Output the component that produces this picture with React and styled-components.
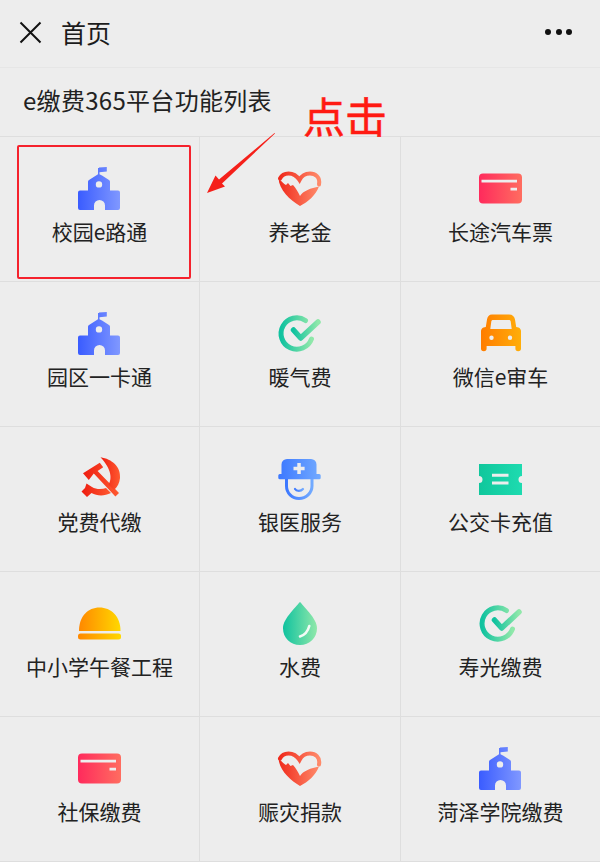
import styled, { createGlobalStyle } from 'styled-components';

const GlobalStyle = createGlobalStyle`
    html, body {
        margin: 0;
        padding: 0;
        background: #ededed;
        overflow: hidden;
    }
`;

const Page = styled.div`
    position: relative;
    width: 600px;
    height: 862px;
    background: #ededed;
    color: #222;
    font-family: "Noto Sans CJK SC", "Noto Sans", sans-serif;
`;

const Header = styled.header`
    height: 68px;
    box-sizing: border-box;
    display: flex;
    align-items: center;
    padding: 0 19px 3px;
    border-bottom: 1px solid #e6e6e6;
`;

const HeaderTitle = styled.h1`
    flex: 1;
    margin: 0 0 0 19px;
    font-size: 25px;
    font-weight: 400;
    line-height: 32px;
    color: #1c1c1c;
`;

const Dots = styled.div`
    display: flex;
    gap: 4.5px;
    margin-right: 9px;
`;

const Dot = styled.span`
    width: 6px;
    height: 6px;
    border-radius: 50%;
    background: #111;
`;

const SectionTitle = styled.h2`
    height: 68px;
    margin: 0;
    padding: 0 23px 6px;
    box-sizing: border-box;
    display: flex;
    align-items: center;
    font-size: 24px;
    font-weight: 400;
    letter-spacing: 0.3px;
    color: #222;
`;

const Grid = styled.div`
    display: grid;
    grid-template-columns: 200px 201px 199px;
    grid-auto-rows: 145px;
    border-top: 1px solid #dedede;
`;

const Cell = styled.div`
    position: relative;
    display: flex;
    flex-direction: column;
    align-items: center;
    padding-top: 30px;
    box-sizing: border-box;
    border-right: ${({ $last }) => ($last ? 'none' : '1px solid #dedede')};
    border-bottom: 1px solid #dedede;
`;

const Glyph = styled.svg`
    display: block;
    width: 44px;
    height: 44px;
    overflow: visible;
`;

const Label = styled.span`
    margin-top: 5px;
    font-size: 21px;
    line-height: 30px;
    white-space: nowrap;
`;

const Highlight = styled.div`
    position: absolute;
    left: 17px;
    top: 8px;
    width: 170px;
    height: 130px;
    border: 2px solid #f5222d;
    border-radius: 2px;
`;

const ClickNote = styled.div`
    position: absolute;
    left: 303px;
    top: 85px;
    font-size: 42px;
    font-weight: 400;
    line-height: 60px;
    color: #ff1a12;
    -webkit-text-stroke: 0.5px #ff1a12;
`;

const Arrow = styled.svg`
    position: absolute;
    left: 200px;
    top: 128px;
`;

const Defs = styled.svg`
    position: absolute;
    width: 0;
    height: 0;
`;

const gradients = {
    blue: ['#3a5cff', '#8098ff'],
    red: ['#f02a1c', '#ff8a6a'],
    pink: ['#ff2a5c', '#ff6d60'],
    green: ['#10c29f', '#90e8aa'],
    orange: ['#ff7c00', '#ffae0a'],
    party: ['#ee1c10', '#ff5a30'],
    sky: ['#3c78ff', '#72aaff'],
    teal: ['#10c79c', '#1edbb0'],
    sun: ['#ff8800', '#ffd800'],
};

const School = () => (
    <Glyph viewBox="0 0 44 44">
        <path fill="url(#blue)" fillRule="evenodd" d="M20 7.200V1h1v-.5L28.800 0v4.400L21.500 5.200v2L24 8.500 31 13c.7.500 1 1 1 1.800v8.700h8a2 2 0 0 1 2 2V41a2 2 0 0 1-2 2H27v-4.500a5.500 5.500 0 0 0-11 0V43H2a2 2 0 0 1-2-2V25.500a2 2 0 0 1 2-2h8v-8.700c0-.8.300-1.300 1-1.800zM21 14.200a3.200 3.200 0 1 0 0 6.400 3.200 3.200 0 0 0 0-6.400z" />
    </Glyph>
);

const Heart = () => (
    <Glyph viewBox="0 0 44 44">
        <path fill="none" stroke="url(#red)" strokeWidth="4" strokeLinecap="round" d="M41 17.500C42.500 10 37 6.500 32 6.500 27 6.500 23.500 9 21.500 13 19 9 15 6.500 10.500 6.500 6 6.500 3.500 8.500 2 11.500" />
        <path fill="url(#red)" d="M.5 11C3 14 6 17 8 18l2-2 2.500 3 2.500-1C18 21 20 25 22 29 25 24 33 21 41 19.500 38 28 30 35 22 39 12 33 1 23 .5 11z" />
    </Glyph>
);

const Card = () => (
    <Glyph viewBox="0 0 44 44">
        <path fill="url(#pink)" fillRule="evenodd" d="M4 6.500h35a4 4 0 0 1 4 4v22a4 4 0 0 1-4 4H4a4 4 0 0 1-4-4v-22a4 4 0 0 1 4-4zM2.500 12.800v2.800H38v-2.800zM31.500 20.800v2.600H38v-2.600z" />
    </Glyph>
);

const Check = () => (
    <Glyph viewBox="0 0 44 44">
        <path fill="none" stroke="url(#green)" strokeWidth="5" strokeLinecap="round" d="M27.500 8.500A15.700 15.700 0 1 0 33.500 27" />
        <path fill="none" stroke="url(#green)" strokeWidth="5.500" strokeLinecap="round" strokeLinejoin="round" d="M15.500 18l7.200 8L40 10" />
    </Glyph>
);

const Car = () => (
    <Glyph viewBox="0 0 44 44">
        <path fill="url(#orange)" fillRule="evenodd" d="M13 2.500h17c3.500 0 5.500 2 6 5l1.200 7.500 2.300.5C41 16 42 17.500 42 19v17.500a2.800 2.800 0 0 1-5.600 0V34H7.600v2.500a2.800 2.800 0 0 1-5.600 0V19c0-1.500 1-3 2.500-3.500L6.800 15 8 7.500c.5-3 2-5 5-5zM14 8c-1 0-1.500.5-1.700 1.500L11.300 17h21.400l-1-7.500C31.500 8.500 31 8 30 8zM12.500 23.500a2.200 2.200 0 1 0 0 4.400 2.200 2.200 0 0 0 0-4.400zM31 23.500a2.200 2.200 0 1 0 0 4.400 2.200 2.200 0 0 0 0-4.400z" />
    </Glyph>
);

const Party = () => (
    <Glyph viewBox="0 1 44 44">
        <path fill="url(#party)" d="M5 17.300L21.800 6.700l3.400 4.600-5.600 3.700L41 37l-3.600 3.600-21.600-23-5 6.400z" />
        <path fill="url(#party)" d="M22.500 1.300C34 3 43 11 42 22c-.5 5-2.500 9-6 12l-5.500-5.500C34 23 34 14 22.500 1.300z" />
        <path fill="url(#party)" d="M8.500 27.500L14 31c4 2.500 10 2.500 14 1l5 5c-7 3.500-14 3-19.500 0L9 41l-5.500-5.500L7 32z" />
    </Glyph>
);

const Nurse = () => (
    <Glyph viewBox="0 1 44 44">
        <path fill="url(#sky)" fillRule="evenodd" d="M9 3h24a5.500 5.500 0 0 1 5.500 5.500V18h2.700a1.500 1.500 0 0 1 1.500 1.500v2.300a1.500 1.500 0 0 1-1.500 1.500H1.800A1.500 1.500 0 0 1 .3 21.800v-2.300A1.500 1.500 0 0 1 1.800 18h1.700V8.500A5.500 5.500 0 0 1 9 3zM19.300 7v3.700h-3.800v3.500h3.800V18h3.500v-3.800h3.800v-3.500h-3.800V7z" />
        <path fill="none" stroke="url(#sky)" strokeWidth="3" d="M8.500 23v7c0 7 5.500 12.500 12.500 12.500S34 37 34 30v-7" />
        <path fill="none" stroke="url(#sky)" strokeWidth="2.200" strokeLinecap="round" d="M17 33c1.500 2.500 6 2.500 8 0" />
    </Glyph>
);

const Ticket = () => (
    <Glyph viewBox="0 1 44 44">
        <path fill="url(#teal)" fillRule="evenodd" d="M0 8h43v12a3.500 3.500 0 0 0 0 7v12H0V27a3.500 3.500 0 0 0 0-7zM13 17.800v3h16.500v-3zM13 25.500v3h16.500v-3z" />
    </Glyph>
);

const Helmet = () => (
    <Glyph viewBox="0 1 44 44">
        <path fill="url(#sun)" d="M1 30C1 15 10 6.500 21.500 6.500S42.500 15 42.500 30z" />
        <rect x="0" y="32.500" width="43" height="6" rx="2.500" fill="url(#sun)" />
    </Glyph>
);

const Drop = () => (
    <Glyph viewBox="0 1 44 44">
        <path fill="url(#green)" d="M22 .8c1 1.500 5 5.500 9 10.500 5 6 8 11 8 16C39 37 31.500 44 22 44S5 37 5 27.300c0-5 3-10 8-16 4-5 8-9 9-10.500z" />
        <path fill="none" stroke="#f3fbf6" strokeWidth="2.600" strokeLinecap="round" d="M22 35.500c5-1.500 8-5.500 9.300-10.500" />
    </Glyph>
);

const items = [
    [School, '校园e路通'], [Heart, '养老金'], [Card, '长途汽车票'],
    [School, '园区一卡通'], [Check, '暖气费'], [Car, '微信e审车'],
    [Party, '党费代缴'], [Nurse, '银医服务'], [Ticket, '公交卡充值'],
    [Helmet, '中小学午餐工程'], [Drop, '水费'], [Check, '寿光缴费'],
    [Card, '社保缴费'], [Heart, '赈灾捐款'], [School, '菏泽学院缴费'],
];

const App = () => (
    <Page>
        <GlobalStyle />
        <Defs aria-hidden="true">
            <defs>
                {Object.entries(gradients).map(([id, [from, to]]) => (
                    <linearGradient key={id} id={id} x1="0" y1="0" x2="1" y2="0">
                        <stop offset="0" stopColor={from} />
                        <stop offset="1" stopColor={to} />
                    </linearGradient>
                ))}
            </defs>
        </Defs>
        <Header>
            <svg width="23" height="23" viewBox="0 0 23 23">
                <path d="M1.500 1.500l20 20M21.500 1.500l-20 20" stroke="#111" strokeWidth="2" fill="none" />
            </svg>
            <HeaderTitle>首页</HeaderTitle>
            <Dots>
                <Dot />
                <Dot />
                <Dot />
            </Dots>
        </Header>
        <SectionTitle>e缴费365平台功能列表</SectionTitle>
        <Grid>
            {items.map(([Icon, label], i) => (
                <Cell key={label} $last={i % 3 === 2}>
                    <Icon />
                    <Label>{label}</Label>
                    {i === 0 && <Highlight />}
                </Cell>
            ))}
        </Grid>
        <ClickNote>点击</ClickNote>
        <Arrow width="80" height="70" viewBox="0 0 80 70">
            <path fill="#f5201a" d="M75 5.500L22 55.500l3 3L7 65l8.500-17.500 3.500 4L74.500 5z" />
        </Arrow>
    </Page>
);

export default App;
